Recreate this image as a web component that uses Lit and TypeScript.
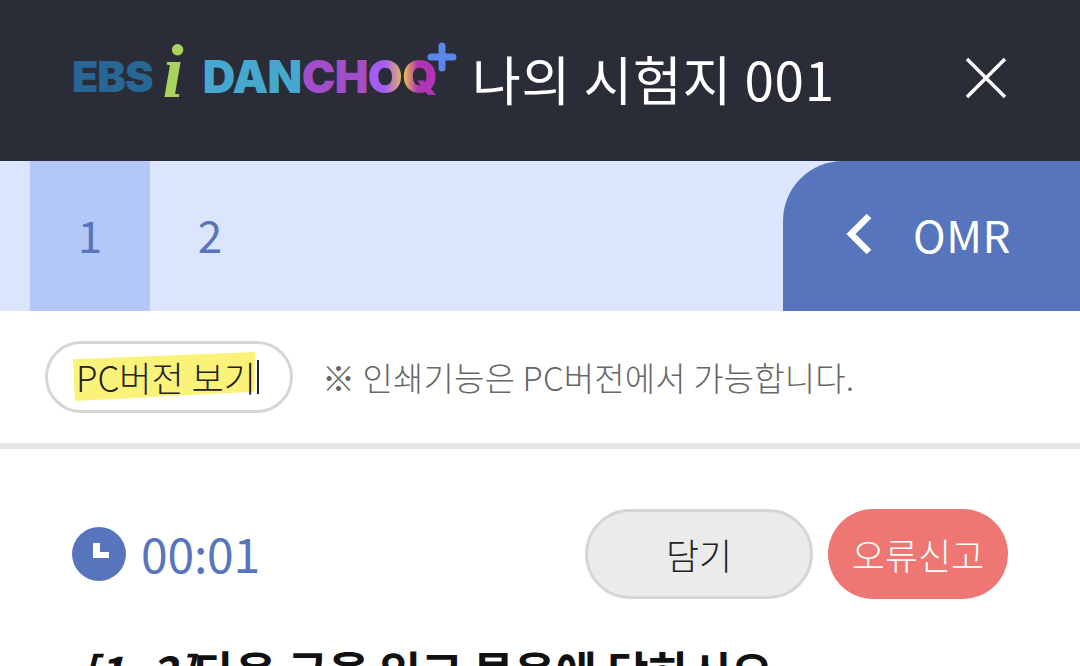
import { LitElement, TemplateResult, css, html } from 'lit';
import { customElement } from 'lit/decorators.js';

@customElement('app-root')
export class AppRoot extends LitElement {
  static styles = css`
    :host {
      display: block;
      width: 1080px;
      height: 666px;
      overflow: hidden;
      background: #fff;
      font-family: 'Noto Sans CJK KR', 'Noto Sans', sans-serif;
    }
    .header {
      height: 161px;
      background: #2a2d38;
      display: flex;
      align-items: center;
      padding: 0 72px;
      box-sizing: border-box;
    }
    .logo {
      display: flex;
      align-items: center;
      font-family: 'Inter', 'Liberation Sans', sans-serif;
      font-weight: 900;
      font-size: 45px;
      line-height: 1;
      position: relative;
      width: 401px;
      flex: none;
      height: 70px;
      margin-top: -8px;
      letter-spacing: -0.6px;
    }
    .ebs {
      color: #276695;
      font-size: 43px;
      letter-spacing: -1px;
    }
    .i {
      font-family: 'Liberation Serif', serif;
      font-style: italic;
      font-weight: 700;
      font-size: 76px;
      color: #a9d25f;
      width: 50px;
      padding-right: 10px;
      box-sizing: border-box;
      text-align: center;
      margin-top: -12px;
    }
    .dan {
      color: #46a8cf;
    }
    .ch {
      color: #a24ec8;
    }
    .oq {
      background: linear-gradient(90deg, #a65cf0 0 25%, #e8c050 52%, #b034b4 72%);
      -webkit-background-clip: text;
      background-clip: text;
      color: transparent;
    }
    .plus {
      position: absolute;
      left: 355px;
      top: 0;
    }
    .title {
      color: #fff;
      font-size: 53px;
      line-height: 1;
      letter-spacing: 0.7px;
      white-space: nowrap;
      margin-top: -4px;
      margin-left: -1px;
    }
    .close {
      margin-left: auto;
      margin-right: 1px;
      margin-top: -5px;
      display: flex;
    }
    .tabs {
      height: 150px;
      background: #dbe5fb;
      display: flex;
      padding-left: 30px;
    }
    .tab {
      width: 120px;
      display: flex;
      align-items: center;
      justify-content: center;
      font-size: 44px;
      color: #5675bd;
      padding-bottom: 4px;
      box-sizing: border-box;
    }
    .tab.on {
      background: #b3c8f8;
    }
    .omr {
      margin-left: auto;
      width: 297px;
      background: #5675bd;
      border-top-left-radius: 60px;
      display: flex;
      align-items: center;
      padding-left: 62px;
      padding-bottom: 4px;
      box-sizing: border-box;
      gap: 40px;
      color: #fff;
      font-size: 44px;
      letter-spacing: 0.5px;
    }
    .tools {
      height: 132px;
      display: flex;
      align-items: center;
      padding-left: 45px;
      gap: 29px;
      border-bottom: 6px solid #e5e5e5;
    }
    .pc {
      width: 248px;
      height: 72px;
      box-sizing: border-box;
      border: 3px solid #d6d6d6;
      border-radius: 36px;
      display: flex;
      align-items: center;
      padding-left: 28px;
      font-size: 35px;
      font-weight: 300;
      color: #222;
      white-space: nowrap;
    }
    .mark {
      position: relative;
      z-index: 0;
      border-right: 2px solid #222;
      line-height: 34px;
      padding-right: 1px;
    }
    .mark::before {
      content: '';
      position: absolute;
      z-index: -1;
      left: -3px;
      right: 2px;
      top: -8px;
      bottom: -7px;
      background: #fbf27a;
      clip-path: polygon(0 15%, 100% 0, 100% 81%, 1% 100%);
    }
    .note {
      font-size: 33px;
      font-weight: 300;
      letter-spacing: 0.15px;
      color: #666;
      white-space: nowrap;
    }
    .status {
      display: flex;
      align-items: center;
      padding: 60px 72px 0;
    }
    .timer {
      display: flex;
      align-items: center;
      gap: 15px;
      color: #5675bd;
      font-size: 48px;
      line-height: 1;
    }
    .timer span {
      margin-top: -4px;
      letter-spacing: -0.2px;
    }
    .buttons {
      margin-left: auto;
      display: flex;
      gap: 15px;
    }
    .btn {
      height: 90px;
      border-radius: 45px;
      box-sizing: border-box;
      display: flex;
      align-items: center;
      justify-content: center;
      font-size: 36px;
      font-weight: 300;
    }
    .keep {
      width: 228px;
      background: #ebebeb;
      border: 3px solid #d6d6d6;
      color: #222;
    }
    .report {
      width: 180px;
      background: #ee7673;
      color: #fff;
    }
    .question {
      margin: 49px 0 0 80px;
      font-size: 45px;
      line-height: 1;
      font-weight: 700;
      color: #111;
      white-space: nowrap;
    }
    .question em {
      font-style: italic;
    }
  `;

  public render(): TemplateResult {
    return html`
      <div class="header">
        <div class="logo">
          <span class="ebs">EBS</span><span class="i">i</span>
          <span class="dan">DAN</span><span class="ch">CH</span><span class="oq">OQ</span>
          <svg class="plus" width="30" height="30" viewBox="0 0 30 30">
            <path d="M15 4v22M4 15h22" stroke="#5a86ea" stroke-width="7" stroke-linecap="round" fill="none" />
          </svg>
        </div>
        <div class="title">나의 시험지 001</div>
        <svg class="close" width="42" height="42" viewBox="0 0 42 42">
          <path d="M2 2l38 38M40 2L2 40" stroke="#fff" stroke-width="3.5" fill="none" />
        </svg>
      </div>
      <div class="tabs">
        <div class="tab on">1</div>
        <div class="tab">2</div>
        <div class="omr">
          <svg width="28" height="42" viewBox="0 0 28 42">
            <path d="M24 3L6 21l18 18" stroke="#fff" stroke-width="6.5" fill="none" />
          </svg>
          <span>OMR</span>
        </div>
      </div>
      <div class="tools">
        <div class="pc"><span class="mark">PC버전 보기</span></div>
        <div class="note">※ 인쇄기능은 PC버전에서 가능합니다.</div>
      </div>
      <div class="status">
        <div class="timer">
          <svg width="54" height="54" viewBox="0 0 54 54">
            <circle cx="27" cy="27" r="27" fill="#5675bd" />
            <path d="M21 16v15h16v-6H28V16z" fill="#fff" />
          </svg>
          <span>00:01</span>
        </div>
        <div class="buttons">
          <div class="btn keep">담기</div>
          <div class="btn report">오류신고</div>
        </div>
      </div>
      <div class="question"><em>[1~2]</em>다음 글을 읽고 물음에 답하시오.</div>
    `;
  }
}
